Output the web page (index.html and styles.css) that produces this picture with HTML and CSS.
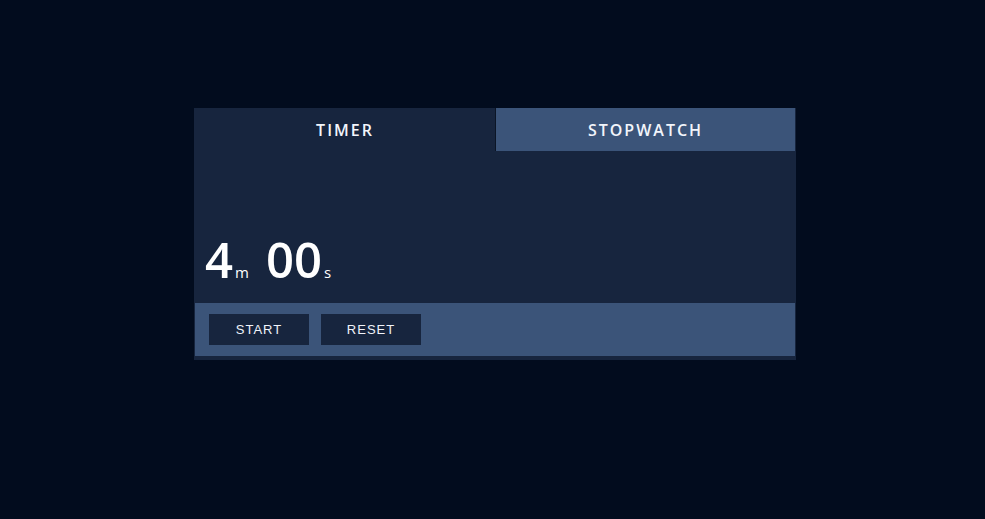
FILE: index.html
```html
<!DOCTYPE html>
<html>
<head>
<meta charset="utf-8">
<link rel="stylesheet" href="styles.css">
</head>
<body>
<div class="card">
  <div class="tabs">
    <div class="tab active">TIMER</div>
    <div class="tab">STOPWATCH</div>
  </div>
  <div class="display">
    <div class="time"><span class="num">4</span><span class="unit">m</span><span class="num second">00</span><span class="unit">s</span></div>
  </div>
  <div class="controls">
    <button class="btn">START</button>
    <button class="btn">RESET</button>
  </div>
</div>
</body>
</html>
```
FILE: styles.css
```css
html, body { margin: 0; padding: 0; }
body {
  background: #020c1e;
  height: 519px;
  font-family: "Open Sans", "Noto Sans", sans-serif;
}
.card {
  margin: 108px 0 0 194px;
  width: 600px;
  background: #17253e;
  padding: 0 1px 4px 1px;
  display: flex;
  flex-direction: column;
}
.tabs {
  display: grid;
  grid-template-columns: 300px 300px;
  height: 43px;
}
.tab {
  display: flex;
  align-items: center;
  justify-content: center;
  color: #f2f5fb;
  font-size: 16px;
  font-weight: 600;
  letter-spacing: 2px;
  padding-top: 1px;
}
.tab.active { background: #17253e; }
.tab:not(.active) {
  background: #3b5479;
  border-left: 1px solid #0b1526;
}
.display {
  height: 152px;
  display: flex;
  align-items: flex-end;
  padding-left: 10px;
  box-sizing: border-box;
  padding-bottom: 19px;
}
.time {
  color: #ffffff;
  display: flex;
  align-items: baseline;
}
.num {
  font-size: 49px;
  font-weight: 600;
  line-height: 1;
}
.second { margin-left: 17px; }
.unit {
  font-size: 15px;
  margin-left: 2px;
}
.controls {
  height: 53px;
  background: #3b5479;
  display: flex;
  align-items: center;
  gap: 12px;
  padding: 0 14px;
}
.btn {
  width: 100px;
  height: 31px;
  background: #17253e;
  border: none;
  color: #f0f3fa;
  font-family: "Liberation Sans", Arial, sans-serif;
  font-size: 13px;
  letter-spacing: 1px;
  padding: 0;
}
```
